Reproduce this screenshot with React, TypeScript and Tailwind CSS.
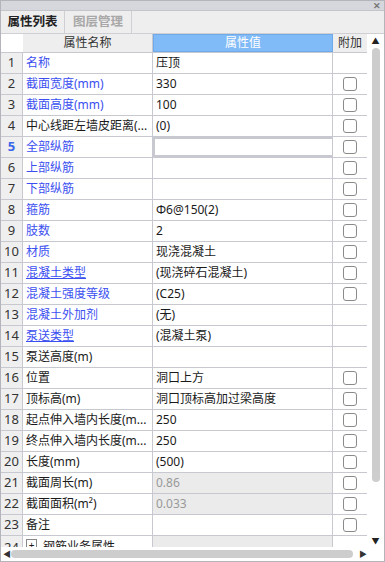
import React from "react";

type Row = {
    name: string;
    value?: string;
    blue?: boolean;
    underline?: boolean;
    check?: boolean;
    gray?: boolean;
    selected?: boolean;
};

const rows: Row[] = [
    { name: "名称", value: "压顶", blue: true },
    { name: "截面宽度(mm)", value: "330", blue: true, check: true },
    { name: "截面高度(mm)", value: "100", blue: true, check: true },
    { name: "中心线距左墙皮距离(...", value: "(0)", check: true },
    { name: "全部纵筋", value: "", blue: true, check: true, selected: true },
    { name: "上部纵筋", value: "", blue: true, check: true },
    { name: "下部纵筋", value: "", blue: true, check: true },
    { name: "箍筋", value: "Φ6@150(2)", blue: true, check: true },
    { name: "肢数", value: "2", blue: true, check: true },
    { name: "材质", value: "现浇混凝土", blue: true, check: true },
    { name: "混凝土类型", value: "(现浇碎石混凝土)", blue: true, underline: true, check: true },
    { name: "混凝土强度等级", value: "(C25)", blue: true, check: true },
    { name: "混凝土外加剂", value: "(无)", blue: true },
    { name: "泵送类型", value: "(混凝土泵)", blue: true, underline: true },
    { name: "泵送高度(m)", value: "" },
    { name: "位置", value: "洞口上方", check: true },
    { name: "顶标高(m)", value: "洞口顶标高加过梁高度", check: true },
    { name: "起点伸入墙内长度(m...", value: "250", check: true },
    { name: "终点伸入墙内长度(m...", value: "250", check: true },
    { name: "长度(mm)", value: "(500)", check: true },
    { name: "截面周长(m)", value: "0.86", gray: true, check: true },
    { name: "截面面积(m²)", value: "0.033", gray: true, check: true },
    { name: "备注", value: "", check: true },
];

function Check() {
    return <div className="w-[14px] h-[14px] rounded-[3px] border border-[#8a8a8a] bg-white" />;
}

export default function App() {
    return (
        <div
            className="w-[385px] h-[562px] bg-white border border-[#b4b4bc] flex flex-col overflow-hidden text-[12px] text-[#1a1a1a]"
            style={{ fontFamily: '"Noto Sans", "Noto Sans CJK SC", sans-serif' }}
        >
            {/* title strip */}
            <div className="h-[10px] bg-[#d6d7dc] border-b border-[#c4c5cb] flex justify-end items-center pr-[3px] shrink-0">
                <span className="text-[9px] leading-none text-[#777] font-bold">✕</span>
            </div>

            {/* tabs */}
            <div className="h-[23px] bg-[#eeeeee] border-b border-[#cfcfd4] flex shrink-0">
                <div className="w-[64px] border-r border-[#d0d0d4] flex items-center justify-center text-[12.5px] font-semibold text-[#222]">
                    属性列表
                </div>
                <div className="w-[67px] border-r border-[#d0d0d4] flex items-center justify-center text-[12.5px] font-semibold text-[#a8a8a8]">
                    图层管理
                </div>
            </div>

            <div className="flex flex-1 min-h-0">
                <div className="flex-1 flex flex-col min-w-0">
                    {/* header */}
                    <div className="h-[19px] flex shrink-0 border-b border-[#c8c8d0]">
                        <div className="w-[22px] bg-white" />
                        <div className="w-[130px] bg-[#eeeeee] border-r border-[#c8c8d0] flex items-center justify-center text-[#333]">
                            属性名称
                        </div>
                        <div className="w-[180px] bg-[#80baf7] border border-[#6ea9ea] flex items-center justify-center text-white">
                            属性值
                        </div>
                        <div className="flex-1 bg-[#eeeeee] flex items-center justify-center text-[#333]">附加</div>
                    </div>

                    {/* rows */}
                    <div className="flex-1 min-h-0 overflow-hidden">
                        {rows.map((r, i) => (
                            <div key={i} className="h-[21px] flex border-b border-[#c8c8d0]">
                                <div
                                    className={`w-[22px] bg-[#efefef] border-r border-[#c8c8d0] flex items-center justify-center text-[13px] ${r.selected ? "text-[#3b67e8] font-bold" : "text-[#333]"}`}
                                >
                                    {i + 1}
                                </div>
                                <div
                                    className={`w-[130px] border-r border-[#c8c8d0] flex items-center pl-[3px] whitespace-nowrap overflow-hidden ${r.blue ? "text-[#3b4ff0]" : "text-[#1a1a1a]"} ${r.underline ? "underline" : ""}`}
                                >
                                    {r.name}
                                </div>
                                <div
                                    className={`w-[180px] border-r border-[#c8c8d0] flex items-center pl-[3px] whitespace-nowrap ${r.gray ? "bg-[#ebebeb] text-[#999]" : ""} ${r.selected ? "border-2 border-[#7b7b7b]" : ""}`}
                                >
                                    {r.value}
                                </div>
                                <div className="flex-1 flex items-center justify-center">{r.check && <Check />}</div>
                            </div>
                        ))}
                        <div className="h-[21px] flex">
                            <div className="w-[22px] bg-[#efefef] border-r border-[#c8c8d0] flex items-start justify-center pt-[2px] text-[13px] text-[#333]">
                                24
                            </div>
                            <div className="w-[130px] border-r border-[#c8c8d0] flex items-start gap-[6px] pl-[3px] pt-[3px] whitespace-nowrap">
                                <span className="w-[11px] h-[11px] border border-[#888] flex items-center justify-center text-[10px] leading-none">+</span>
                                <span className="-mt-[1px]">钢筋业务属性</span>
                            </div>
                            <div className="w-[180px] bg-[#ebebeb] border-r border-[#c8c8d0]" />
                            <div className="flex-1" />
                        </div>
                    </div>

                    {/* horizontal scrollbar */}
                    <div className="h-[14px] flex items-center shrink-0 bg-white">
                        <span className="text-[8px] text-[#333] w-[8px] pl-[2px] leading-none">◀</span>
                        <div className="flex-1 h-[8px] rounded-full bg-[#cdcdcd] ml-[2px] mr-[6px]" />
                        <span className="text-[8px] text-[#333] w-[8px] leading-none">▶</span>
                    </div>
                </div>

                {/* vertical scrollbar */}
                <div className="w-[17px] flex flex-col items-center pt-[2px] pb-[16px]">
                    <span className="text-[8px] text-[#222] leading-none mt-[1px]">▲</span>
                    <div className="w-[8px] h-[434px] rounded-full bg-[#cdcdcd] mt-[3px]" />
                    <div className="flex-1" />
                    <span className="text-[8px] text-[#222] leading-none">▼</span>
                </div>
            </div>
        </div>
    );
}
